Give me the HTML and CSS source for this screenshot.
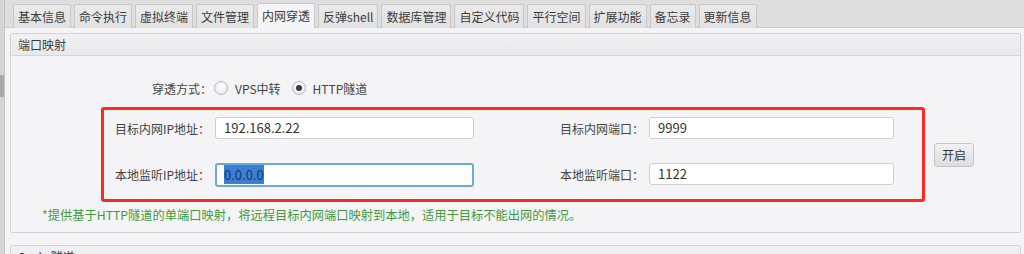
FILE: index.html
```html
<!DOCTYPE html>
<html lang="zh-CN">
<head>
<meta charset="utf-8">
<title>内网穿透</title>
<link rel="stylesheet" href="styles.css">
</head>
<body>
<div class="app">
  <div class="side"><div class="side-thumb"></div></div>
  <div class="main">
    <div class="tabs">
      <div class="tab">基本信息</div>
      <div class="tab">命令执行</div>
      <div class="tab">虚拟终端</div>
      <div class="tab">文件管理</div>
      <div class="tab active">内网穿透</div>
      <div class="tab">反弹shell</div>
      <div class="tab">数据库管理</div>
      <div class="tab">自定义代码</div>
      <div class="tab">平行空间</div>
      <div class="tab">扩展功能</div>
      <div class="tab">备忘录</div>
      <div class="tab">更新信息</div>
    </div>
    <div class="panel">
      <section class="group">
        <div class="group-head">端口映射</div>
        <div class="group-body">
          <div class="mode-row">
            <span class="mode-label">穿透方式：</span>
            <label class="radio"><span class="radio-dot"></span><span>VPS中转</span></label>
            <label class="radio checked"><span class="radio-dot"></span><span>HTTP隧道</span></label>
          </div>
          <div class="form-row">
            <div class="highlight">
              <div class="field-grid">
                <span class="field-label">目标内网IP地址：</span>
                <div class="input">192.168.2.22</div>
                <span class="field-label">目标内网端口：</span>
                <div class="input">9999</div>
                <span class="field-label">本地监听IP地址：</span>
                <div class="input focused"><span class="selected">0.0.0.0</span></div>
                <span class="field-label">本地监听端口：</span>
                <div class="input">1122</div>
              </div>
            </div>
            <button class="btn">开启</button>
          </div>
          <p class="note">*提供基于HTTP隧道的单端口映射，将远程目标内网端口映射到本地，适用于目标不能出网的情况。</p>
        </div>
      </section>
      <section class="group">
        <div class="group-head">Socks隧道</div>
      </section>
    </div>
  </div>
</div>
</body>
</html>
```

FILE: styles.css
```css
* { box-sizing: border-box; }

html, body {
  margin: 0;
  padding: 0;
  height: 254px;
  overflow: hidden;
}

body {
  background: #e0dfe0;
  font-family: "Noto Sans CJK SC", sans-serif;
  font-size: 12px;
  color: #3a3a3a;
}

.app {
  display: flex;
  height: 254px;
}

.side {
  width: 4px;
  background: #d6d6d6;
  padding-top: 75px;
}

.side-thumb {
  height: 22px;
  background: #a9a9a9;
}

.main {
  flex: 1;
  display: flex;
  flex-direction: column;
  border-left: 1px solid #c4c4c4;
  min-width: 0;
}

.tabs {
  display: flex;
  gap: 3px;
  height: 28px;
  padding: 4px 0 0 8px;
  background: #dfdedf;
  border-bottom: 1px solid #cdcdcd;
}

.tab {
  height: 24px;
  padding: 0 4px;
  line-height: 23px;
  border: 1px solid #c9c8c9;
  border-bottom: none;
  border-radius: 2px 2px 0 0;
  background: linear-gradient(#ebeaeb, #e2e1e2);
  color: #3c3c3c;
  white-space: nowrap;
}

.tab.active {
  height: 25px;
  margin-top: -1px;
  margin-bottom: -1px;
  background: #f5f4f6;
  position: relative;
}

.panel {
  flex: 1;
  background: #f4f3f5;
  padding: 5px 3px 0 5px;
  display: flex;
  flex-direction: column;
  gap: 12px;
}

.group {
  border: 1px solid #d3d2d4;
  border-radius: 2px;
  background: #f4f3f5;
}

.group-head {
  height: 22px;
  line-height: 21px;
  padding-left: 7px;
  background: linear-gradient(#f1f0f2, #e9e8ea);
  border-bottom: 1px solid #d6d5d7;
  color: #3c3c3c;
}

.group-body {
  padding: 22px 0 9px 0;
}

.mode-row {
  display: flex;
  align-items: center;
  height: 20px;
  padding-left: 141px;
  color: #444;
}

.mode-label {
  margin-right: 2px;
}

.radio {
  display: flex;
  align-items: center;
  gap: 7px;
  margin-right: 11px;
}

.radio-dot {
  width: 14px;
  height: 14px;
  border-radius: 50%;
  border: 1px solid #b9b8ba;
  background: radial-gradient(circle at 50% 35%, #ffffff, #e4e3e5);
  display: flex;
  align-items: center;
  justify-content: center;
}

.radio.checked .radio-dot::after {
  content: "";
  width: 6px;
  height: 6px;
  border-radius: 50%;
  background: #3a3a3a;
}

.form-row {
  display: flex;
  align-items: center;
  gap: 9px;
  margin-top: 9px;
  padding-left: 90px;
}

.highlight {
  width: 824px;
  border: 3px solid #ff2a1f;
  border-radius: 3px;
  padding: 7px 28px 14px 0;
}

.field-grid {
  display: grid;
  grid-template-columns: 111px 259px 175px 245px;
  grid-auto-rows: 22px;
  row-gap: 24px;
  align-items: center;
}

.field-label {
  text-align: right;
  padding-right: 5px;
  color: #444;
  white-space: nowrap;
}

.input {
  height: 22px;
  line-height: 20px;
  padding-left: 8px;
  background: #ffffff;
  border: 1px solid #cfcfd1;
  border-radius: 3px;
  font-size: 13px;
  color: #333;
}

.input.focused {
  height: 24px;
  border: 2px solid #6da8dd;
  padding-left: 7px;
  margin-top: 1px;
}

.selected {
  background: #3c7fd2;
  color: #163a6b;
}

.btn {
  width: 40px;
  height: 24px;
  padding: 0;
  font-family: inherit;
  font-size: 12px;
  color: #333;
  border: 1px solid #c6c5c7;
  border-radius: 3px;
  background: linear-gradient(#f2f1f3, #dddcde);
}

.note {
  margin: 5px 0 0 31px;
  line-height: 16px;
  font-size: 12.25px;
  color: #3f9a3f;
}
```
